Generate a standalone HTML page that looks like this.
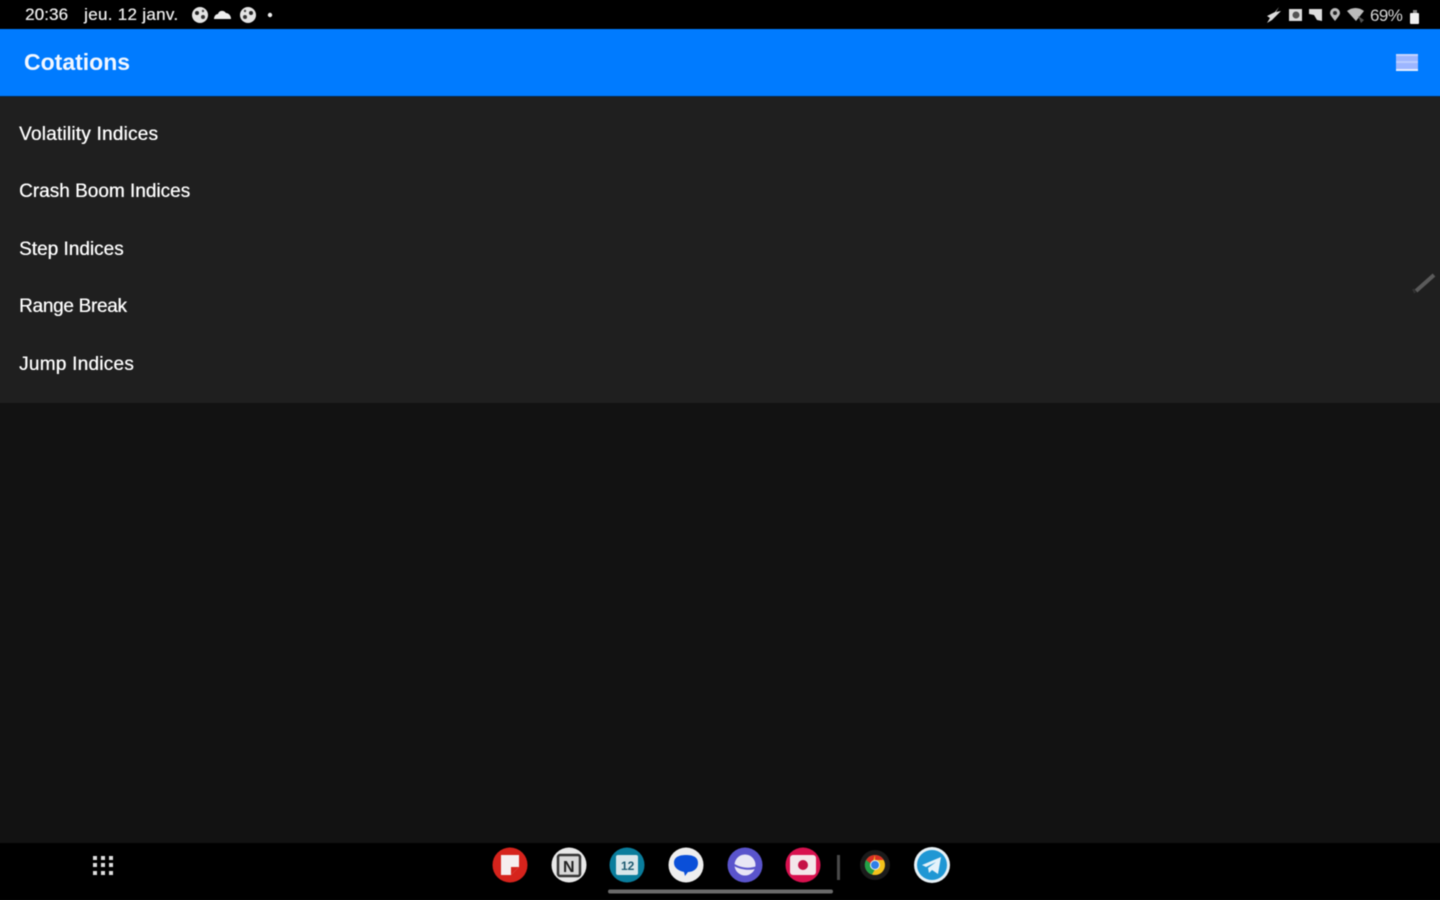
<!DOCTYPE html>
<html lang="fr"><head><meta charset="utf-8"><title>Cotations</title>
<style>
html,body{margin:0;padding:0;width:1440px;height:900px;overflow:hidden;background:#121212;font-family:"Liberation Sans",sans-serif}
.a{position:absolute}
#clip{position:absolute;left:0;top:0;width:1440px;height:900px;overflow:hidden;contain:paint}
#wrap{position:absolute;left:0;top:0;width:1440px;height:900px;filter:blur(.65px)}
.t{position:absolute;white-space:nowrap;color:#fff;font-size:19px;line-height:22px;left:19px;text-shadow:.3px 0 0 #fff}
.s{position:absolute;white-space:nowrap;color:#ececec;font-size:17px;line-height:20px;top:5px;text-shadow:.3px 0 0 #eee}
</style></head><body><div id="clip"><div id="wrap">
<div class="a" style="left:-6px;top:-6px;width:1452px;height:35px;background:#000"></div>
<div class="s" style="left:25px;letter-spacing:.1px">20:36</div>
<div class="s" style="left:84px;letter-spacing:.3px">jeu. 12 janv.</div>
<svg class="a" style="left:188px;top:4px" width="90" height="22" viewBox="0 0 90 22">
<circle cx="12" cy="11" r="8" fill="#e4e4e4"/><circle cx="9" cy="9" r="2" fill="#222"/><circle cx="15" cy="13" r="2" fill="#333"/><circle cx="15" cy="7" r="1.2" fill="#444"/>
<path d="M26 15c0-3 2-5 4-5 1-4 6-4 8-1 2 0 5 2 5 6z" fill="#eee"/>
<circle cx="60" cy="11" r="8" fill="#e4e4e4"/><circle cx="63" cy="9" r="2" fill="#222"/><circle cx="57" cy="13" r="2" fill="#333"/><circle cx="57" cy="7" r="1.2" fill="#444"/>
<circle cx="82" cy="11" r="2.2" fill="#eee"/></svg>
<svg class="a" style="left:1264px;top:4px" width="156" height="22" viewBox="0 0 156 22">
<path d="M15 3 11 8 3 12l3 2-3 5 5-3 9-9-5 1z" fill="#ddd"/>
<rect x="25" y="5" width="13" height="12" fill="#ddd"/><circle cx="32" cy="11" r="3.5" fill="#555"/>
<path d="M45 5h13v12l-5-1-3-5-5-1z" fill="#ddd"/>
<path d="M71 17c-3-4-5-6-5-8a5 5 0 0 1 10 0c0 2-2 4-5 8z" fill="#bbb"/><circle cx="71" cy="9" r="2" fill="#222"/>
<path d="M83 7c5-4 12-4 17 0l-8 10z" fill="#bbb"/><path d="M94 12l6 4-3 3z" fill="#555"/>
<text x="106" y="17" font-family="Liberation Sans,sans-serif" font-size="17" letter-spacing="-.6" fill="#d4d4d4">69%</text>
<rect x="146" y="9" width="9" height="11" rx="1" fill="#f0f0f0"/><rect x="149" y="6" width="4" height="3" fill="#888"/>
</svg>
<div class="a" style="left:-6px;top:29px;width:1452px;height:67px;background:#007bff;box-shadow:0 1px 1px #0a2a50"></div>
<div class="a" style="left:24px;top:48px;color:#f2f7ff;font-size:23px;line-height:28px;font-weight:bold;white-space:nowrap">Cotations</div>
<div class="a" style="left:1396px;top:54px;width:22px;height:17px;background:#9db6ff"></div>
<div class="a" style="left:1396px;top:54px;width:22px;height:2px;background:#c4d4ff"></div>
<div class="a" style="left:1396px;top:61px;width:22px;height:2px;background:#bacdff"></div>
<div class="a" style="left:1396px;top:69px;width:22px;height:2px;background:#e6eeff"></div>
<div class="a" style="left:-6px;top:97px;width:1452px;height:306px;background:#1f1f1f"></div>
<div class="t" style="top:124px;letter-spacing:.22px">Volatility Indices</div>
<div class="t" style="top:181px;letter-spacing:0">Crash Boom Indices</div>
<div class="t" style="top:239px;letter-spacing:0">Step Indices</div>
<div class="t" style="top:296px;letter-spacing:-.3px">Range Break</div>
<div class="t" style="top:354px;letter-spacing:.25px">Jump Indices</div>
<svg class="a" style="left:1410px;top:270px" width="30" height="26" viewBox="0 0 30 26"><path d="M6 21 24 5" stroke="#5a5a5a" stroke-width="4"/><path d="M5 23 3 19" stroke="#333" stroke-width="2"/></svg>
<div class="a" style="left:-6px;top:843px;width:1452px;height:57px;background:#000"></div>
<svg class="a" style="left:90px;top:853px" width="28" height="26" viewBox="0 0 28 26" fill="#ddd">
<rect x="3" y="3" width="4" height="4"/><rect x="11" y="3" width="4" height="4"/><rect x="19" y="3" width="4" height="4"/>
<rect x="3" y="10" width="4" height="4"/><rect x="11" y="10" width="4" height="4"/><rect x="19" y="10" width="4" height="4"/>
<rect x="3" y="18" width="4" height="4"/><rect x="11" y="18" width="4" height="4"/><rect x="19" y="18" width="4" height="4"/></svg>
<svg class="a" style="left:480px;top:840px" width="490" height="60" viewBox="0 0 490 60">
<circle cx="30" cy="25" r="17.5" fill="#d6231c"/><path d="M21 15h18v12l-8 8H21z" fill="#f5eeee"/><path d="M31 35v-8h8z" fill="#d6231c"/>
<circle cx="89" cy="25" r="17.5" fill="#e8e8e8"/><rect x="78" y="15" width="22" height="21" rx="2" fill="#d8d8d8" stroke="#333" stroke-width="2.500"/><text x="83" y="32" font-family="Liberation Sans,sans-serif" font-size="16" font-weight="bold" fill="#222">N</text>
<circle cx="147" cy="25" r="17.5" fill="#0a7d9c"/><rect x="136" y="15" width="22" height="20" rx="2" fill="#d8e6ea"/><text x="141" y="30" font-family="Liberation Sans,sans-serif" font-size="12" font-weight="bold" fill="#1c5a70">12</text>
<circle cx="206" cy="25" r="17.5" fill="#eeeeee"/><path d="M194 23c0-6 5-8 12-8s12 2 12 8-5 9-10 9l-3 4-1-4c-5-1-10-4-10-9z" fill="#0a4fd8"/>
<circle cx="265" cy="25" r="17.5" fill="#5a54cc"/><circle cx="265" cy="25" r="10.5" fill="#e8e6f5"/><path d="M253 23c7 5 16 6 24 3l-2 3c-7 2-16 0-21-3z" fill="#5a54cc"/>
<circle cx="323" cy="25" r="17.5" fill="#d8114f"/><rect x="310" y="15" width="26" height="20" rx="3" fill="#f3e6ea"/><circle cx="323" cy="25" r="5" fill="#c51045"/>
<rect x="357" y="15" width="3" height="25" fill="#4a4a4a"/>
<circle cx="395" cy="25" r="15" fill="#1b1b1b"/><circle cx="395" cy="25" r="10" fill="#f2c21b"/><path d="M395 15a10 10 0 0 0-8.700 5l4.700 8z M395 15a10 10 0 0 1 8.700 5H395z" fill="#d93025"/><path d="M386 20a10 10 0 0 0 6 14.500l4-7z" fill="#23a047"/><circle cx="395" cy="25" r="4.500" fill="#2f7ee8" stroke="#eee" stroke-width="1"/>
<circle cx="452" cy="25" r="18" fill="#e8f2f7"/><circle cx="452" cy="25" r="15" fill="#1f97d4"/><path d="M442 25l19-8-3 17-6-4-3 3-1-5 8-6-10 5z" fill="#e4f2fa"/>
<rect x="128" y="49.500" width="225" height="4" rx="2" fill="#6a6a6a"/>
</svg>
</div></div></body></html>
